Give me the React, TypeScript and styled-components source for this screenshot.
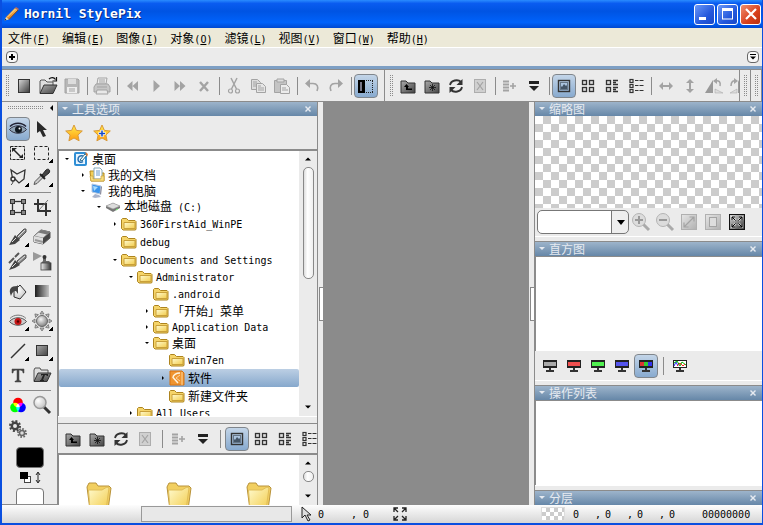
import React from "react";
import styled, { createGlobalStyle, css } from "styled-components";

const FACE = "#ebebeb";
const EDGE = "#8b8b8b";
const CJK = '"Noto Sans CJK SC", sans-serif';
const MONO = '"DejaVu Sans Mono", "Liberation Mono", monospace';

const GlobalStyle = createGlobalStyle`
  *, *::before, *::after { box-sizing: border-box; }
  body { margin: 0; font: 12px/16px ${CJK}; color: #000; }
  button { font: inherit; color: inherit; border: 0; padding: 0; background: none; }
  svg { display: block; flex: none; }
  ul { list-style: none; margin: 0; padding: 0; }
`;

/* ---------- text ---------- */

const Latin = styled.span`
  font: 10px/16px ${MONO};
  white-space: pre;
`;

const Text = ({ children }: { children: string }) => (
  <>
    {children.split(/([\x20-\x7e]+)/).filter(Boolean).map((run, i) =>
      /^[\x20-\x7e]/.test(run) ? <Latin key={i}>{run}</Latin> : <span key={i}>{run}</span>
    )}
  </>
);

/* ---------- icons ---------- */

const G = "#a3a3a3";
const D = "#333";

type SvgProps = { w?: number; h?: number; children: React.ReactNode };
const Svg = ({ w = 20, h = 20, children }: SvgProps) => (
  <svg width={w} height={h} viewBox={`0 0 ${w} ${h}`} fill="none" aria-hidden="true">{children}</svg>
);

const GradientStore = styled.svg`
  position: absolute;
  width: 0;
  height: 0;
`;
const Blend = styled.g`
  mix-blend-mode: screen;
`;
const Isolated = styled.g`
  isolation: isolate;
`;

const Defs = () => (
  <GradientStore aria-hidden="true">
    <defs>
      <linearGradient id="dark" x1="0" y1="0" x2="1" y2="1"><stop offset="0" stopColor="#b5b5b5" /><stop offset="1" stopColor="#222" /></linearGradient>
      <linearGradient id="page" x1="0" y1="0" x2="1" y2="1"><stop offset="0" stopColor="#d8d8d8" /><stop offset="1" stopColor="#3a3a3a" /></linearGradient>
      <linearGradient id="folderDark" x1="0" y1="0" x2="1" y2="1"><stop offset="0" stopColor="#aaa" /><stop offset="1" stopColor="#444" /></linearGradient>
      <linearGradient id="pale" x1="0" y1="0" x2="1" y2="1"><stop offset="0" stopColor="#e6e6e6" /><stop offset="1" stopColor="#b0b0b0" /></linearGradient>
      <linearGradient id="metal" x1="0" y1="0" x2="1" y2="0"><stop offset="0" stopColor="#eee" /><stop offset="1" stopColor="#333" /></linearGradient>
      <linearGradient id="fade" x1="0" y1="0" x2="1" y2="0"><stop offset="0" stopColor="#1c1c1c" /><stop offset="1" stopColor="#c4c4c4" /></linearGradient>
      <linearGradient id="gold" x1="0" y1="0" x2="1" y2="1"><stop offset="0" stopColor="#fffbd0" /><stop offset="1" stopColor="#f2cb4a" /></linearGradient>
      <linearGradient id="star" x1="0" y1="0" x2="0" y2="1"><stop offset="0" stopColor="#ffee4a" /><stop offset="1" stopColor="#ff9a10" /></linearGradient>
      <linearGradient id="pencil" x1="1" y1="0" x2="0" y2="1"><stop offset="0" stopColor="#f8c060" /><stop offset="1" stopColor="#e07818" /></linearGradient>
      <radialGradient id="ball" cx="0.4" cy="0.35" r="0.7"><stop offset="0" stopColor="#f4f4f4" /><stop offset="1" stopColor="#7a7a7a" /></radialGradient>
      <radialGradient id="lens" cx="0.35" cy="0.35" r="0.8"><stop offset="0" stopColor="#fff" /><stop offset="1" stopColor="#bbb" /></radialGradient>
    </defs>
  </GradientStore>
);

const folderBody = "M3 5h5l2 2h7v10H3z";
const star = "M10 2l2.400 5.400 5.900.6-4.400 4 1.200 5.800L10 15l-5.100 2.800L6.100 12 1.700 8l5.900-.6z";
const corners = "M8.500 8.500L5 5m0 3V5h3m3.500 3.500L15 5m-3 0h3v3m-6.500 3.500L5 15m0-3v3h3m3.500-3.500L15 15m-3 0h3v-3";
const lidUpper = "M2 7.500c4-4.500 12-4.500 16 0";
const eyeShape = "M1.500 10.500c4-5 13-5 17 0-4 5-13 5-17 0z";

const I = {
  pencil: <Svg w={17} h={16}><path d="M3 11L12 2l3 2-9 9.500z" fill="url(#pencil)" /><path d="M3 11L1.500 14.500 6 13.500z" fill="#f5e0b5" /><path d="M1.500 14.500l1-2 1 1.500z" fill="#222" /><path d="M12 2l1-1 3 2-1 1z" fill="#c86a50" /><path d="M4 11.500L12.500 3" stroke="#ffe08a" /><path d="M6 13.500L15 4" stroke="#8a4a18" /></Svg>,
  newDoc: <Svg><rect x="4.500" y="3.500" width="11" height="13" fill="url(#page)" stroke={D} /></Svg>,
  open: <Svg><path d="M2 17V5l1-1h4l2 2h6v3" fill="#ddd" stroke="#555" /><path d="M2 17.500L6 9h13l-4 8.500z" fill="url(#folderDark)" stroke={D} /><path d="M11 3c2-2 5-2 6.500.5M18.500 1v4h-4" stroke="#111" strokeWidth="1.200" /></Svg>,
  save: <Svg><path d="M3 3h13l1 1v13H3z" fill="#b7b7b7" stroke={G} /><path d="M6 3h8v5H6z" fill="#ddd" /><path d="M5 11h10v6H5z" fill="#eee" /><path d="M7 13h6M7 15h6" stroke={G} /></Svg>,
  print: <Svg><path d="M6 2h9l-1 6H5z" fill="#eee" stroke={G} /><path d="M4 8h12l2 3v5H2v-5z" fill="#c6c6c6" stroke={G} /><path d="M5 14h10l1 4H4z" fill="#e8e8e8" stroke={G} /><path d="M7 4h6M7 6h6M5 11h10" stroke={G} /></Svg>,
  rewind: <Svg><path d="M10.500 5v10L5 10zM16 5v10l-5.500-5z" fill={G} /></Svg>,
  play: <Svg><path d="M7.500 4v12l6.500-6z" fill={G} /></Svg>,
  forward: <Svg><path d="M4.500 5v10l5.500-5zM10 5v10l5.500-5z" fill={G} /></Svg>,
  cross: <Svg><path d="M6 6l8 9M14 6l-8 9" stroke={G} strokeWidth="2.400" /></Svg>,
  cut: <Svg><path d="M7 2l5.500 11M13 2L7.500 13" stroke={G} strokeWidth="1.500" /><circle cx="6.500" cy="15" r="2" stroke={G} strokeWidth="1.200" /><circle cx="13.500" cy="15" r="2" stroke={G} strokeWidth="1.200" /></Svg>,
  copy: <Svg><path d="M3.500 3.500h6l3 3v7h-9z" fill="#ddd" stroke={G} /><path d="M8.500 7.500h6l3 3v6h-9z" fill="#e6e6e6" stroke={G} /><path d="M5 6h4M5 8h3M5 10h3M10 10h3M10 12h6M10 14h6" stroke={G} /></Svg>,
  paste: <Svg><path d="M2.500 4.500h12v12h-12z" fill="#c4c4c4" stroke={G} /><path d="M5 3h7v3H5z" fill="#ddd" stroke={G} /><path d="M8.500 8.500h6l3 3v6h-9z" fill="#ececec" stroke={G} /><path d="M10 12h4M10 14h6" stroke={G} /></Svg>,
  undo: <Svg><path d="M8 3L3 7.500 8 12z" fill={G} /><path d="M7 7.500h4c4 0 6 3 4 7.500" stroke={G} strokeWidth="1.600" /></Svg>,
  redo: <Svg><path d="M12 3l5 4.500L12 12z" fill={G} /><path d="M13 7.500H9c-4 0-6 3-4 7.500" stroke={G} strokeWidth="1.600" /></Svg>,
  sidebar: <Svg><rect x="2" y="4" width="7" height="13" fill="#000" /><rect x="4" y="6" width="2" height="9" fill="#778" /><path d="M10 4.500h7M10 16.500h7M16.500 5v12" stroke="#222" strokeDasharray="1 1" /></Svg>,
  up: <Svg><path d={folderBody} fill="url(#folderDark)" stroke={D} /><path d="M8.500 8L6 11h2v3h6v-1.500h-4V11h1z" fill="#000" /></Svg>,
  folderNew: <Svg><path d={folderBody} fill="url(#folderDark)" stroke={D} /><path d="M10.500 8v7M7 11.500h7M8 9l5 5M13 9l-5 5" stroke="#111" strokeWidth=".8" /></Svg>,
  refresh: <Svg><path d="M4 9c1-5 8-6 11-3" stroke={D} strokeWidth="1.800" /><path d="M16.500 3v6h-6z" fill={D} /><path d="M16 11c-1 5-8 6-11 3" stroke={D} strokeWidth="1.800" /><path d="M3.500 17v-6h6z" fill={D} /></Svg>,
  deleteBox: <Svg><rect x="4.500" y="3.500" width="11" height="13" fill="#d0d0d0" stroke="#adadad" /><path d="M7 6l6 8M13 6l-6 8" stroke={G} strokeWidth="1.200" /></Svg>,
  listAdd: <Svg><path d="M3 5.500h6M3 8.500h6M3 11.500h6M3 14.500h6" stroke={G} strokeWidth="2" /><path d="M10 10h6M13 7v6" stroke={G} strokeWidth="1.600" /></Svg>,
  drop: <Svg><path d="M5 6.500h10" stroke="#222" strokeWidth="3" /><path d="M5 10h10l-5 5z" fill="#222" /></Svg>,
  picture: <Svg><rect x="4.500" y="4.500" width="11" height="11" stroke={D} strokeWidth="1.400" /><path d="M6 14V9l2 2 2-3 2 2 1-1 1 1v4z" fill="#456" /><rect x="6.500" y="6.500" width="7" height="7" stroke="#678" /></Svg>,
  grid: <Svg>{[4.5, 11.5].map(x => [4.5, 11.5].map(y => <rect key={x + y * 9} x={x} y={y} width="4" height="4" fill="#ddd" stroke={D} strokeWidth="1.300" />))}</Svg>,
  tiles: <Svg>{[4.5, 11.5].map(y => <g key={y} stroke={D} strokeWidth="1.300"><rect x="4.500" y={y} width="4" height="4" fill="#ddd" /><path d={`M11 ${y}h5M11 ${y + 2}h3M11 ${y + 4}h5`} /></g>)}</Svg>,
  list: <Svg>{[4.5, 9.5, 14.5].map(y => <g key={y} stroke={D} strokeWidth="1.200"><rect x="4" y={y - 1} width="3" height="3" /><path d={`M9 ${y}h3.500M13.500 ${y}h4`} /></g>)}</Svg>,
  flipH: <Svg><path d="M3 10l4-4v3h6V6l4 4-4 4v-3H7v3z" fill={G} /></Svg>,
  flipV: <Svg><path d="M10 3l4 4h-3v6h3l-4 4-4-4h3V7H6z" fill={G} /></Svg>,
  rotateL: <Svg><path d="M9 4v13H1z" fill="#999" /><path d="M11 13v4h8z" fill="#ddd" stroke={G} strokeWidth=".5" /><path d="M11 5c4-1 6 1 5 5" stroke={G} strokeWidth="1.500" /><path d="M13 2v6l-4-3z" fill={G} /></Svg>,
  rotateR: <Svg><path d="M2 17h7v-4z" fill="#ddd" stroke={G} strokeWidth=".5" /><path d="M10 4v13h8z" fill="#999" /><path d="M3 10c0-4 2-6 5-5" stroke={G} strokeWidth="1.500" /><path d="M6 2v6l4-3z" fill={G} /></Svg>,
  eye: <Svg><path d={lidUpper} stroke="#223" strokeWidth="1.500" /><path d={eyeShape} fill="#8fa3b5" stroke="#334" /><circle cx="10.500" cy="10.500" r="3.500" fill="#101820" /><circle cx="11.500" cy="9.500" r="1" fill="#fff" /></Svg>,
  redEye: <Svg><path d={lidUpper} stroke="#777" /><path d={eyeShape} fill="#ccc" stroke="#555" /><circle cx="10" cy="10.500" r="3.500" fill="#c41616" /><circle cx="10" cy="10.500" r="1.200" fill="#500" /></Svg>,
  arrow: <Svg><path d="M5 2v12l3-2 3 6 3-1-3-6h4z" fill="#2a2a2a" /></Svg>,
  resizeSel: <Svg><rect x="2.500" y="3.500" width="14" height="13" stroke="#222" strokeDasharray="3 1" /><path d="M6 7l7 7" stroke="#222" strokeWidth="1.500" /><path d="M4 5h5l-5 4zM15 15h-4l4-4z" fill="#222" /></Svg>,
  marquee: <Svg><rect x="2.500" y="3.500" width="14" height="13" stroke="#222" strokeDasharray="3 2" /></Svg>,
  lasso: <Svg><path d="M4.500 11L3 3l6 4 8-4-1 9-5 4-4-4" stroke={D} strokeWidth="1.300" /><circle cx="5" cy="12" r="2" stroke={D} strokeWidth="1.500" /><path d="M5 14c0 2-1 3-2 4" stroke={D} /></Svg>,
  pick: <Svg><path d="M2 17.500l1-3 7-7 2 2-7 7z" fill="#ccc" stroke="#555" /><path d="M10 8l4-5c2-2 5 0 3 3l-5 4z" fill="#444" stroke="#222" /><path d="M8 7l5 5" stroke="#222" strokeWidth="2" /></Svg>,
  transform: <Svg><rect x="4.500" y="4.500" width="11" height="11" stroke={D} strokeWidth="1.300" />{[2, 13].map(x => [2, 13].map(y => <rect key={x * 20 + y} x={x + .5} y={y + .5} width="4" height="4" fill="#888" stroke={D} />))}</Svg>,
  crop: <Svg><path d="M6 2v12h13M2 7h12v12" stroke="#333" strokeWidth="2" /><path d="M7 13l9-10" stroke="#777" /></Svg>,
  brush: <Svg><path d="M9 9l7-7h2v3l-7 7z" fill="#888" stroke="#555" /><path d="M7 8l5 5-5 4-6 1 3-5z" fill="#444" /><path d="M10 10l7-7M4 15l4-4" stroke="#ddd" /></Svg>,
  brushes: <Svg><path d="M9 10l7-6h2v3l-7 6z" fill="#888" stroke="#555" /><path d="M7 9l5 5-5 3-6 2 3-5z" fill="#444" /><path d="M10 11l7-6M4 16l4-4" stroke="#ddd" /><path d="M1 12l5-5M7 6l4-4" stroke="#555" strokeWidth="2" /></Svg>,
  eraser: <Svg><path d="M2 9l7-6 9 2v6l-7 6-9-2z" fill="#444" stroke="#555" /><path d="M2 9l7-6 9 2-7 6z" fill="#ddd" stroke="#777" strokeWidth=".6" /><path d="M6 5.500L9 3l9 2-3 2.500z" fill="#777" /><path d="M2 9l9 2v6l-9-2z" fill="#ddd" /><path d="M3 13l8 2" stroke="#999" strokeWidth="2" /></Svg>,
  spray: <Svg><path d="M1 1v9l9-5z" fill="#999" /><path d="M11 7h3v3h3l2 2H9l2-2z" fill="#666" /><rect x="9" y="12" width="10" height="7" fill="url(#metal)" stroke="#444" strokeWidth=".8" /><circle cx="12.500" cy="6" r="2" fill="#333" /></Svg>,
  bucket: <Svg><path d="M6 10l6-6 6 7-6 7-6-2z" fill="url(#lens)" stroke="#333" /><path d="M9 5C3 5 0 8 3 15c1-3 2-5 5-5l2 3V4z" fill="#444" /></Svg>,
  gradient: <Svg><rect x="3" y="4" width="14" height="12" fill="url(#fade)" /></Svg>,
  sun: <Svg>{[0, 45, 90, 135, 180, 225, 270, 315].map(a => <path key={a} d="M8 3l2-3 2 3z" fill="#bbb" stroke="#666" strokeWidth=".7" transform={`rotate(${a} 10 10)`} />)}<circle cx="10" cy="10" r="5.500" fill="url(#ball)" stroke="#666" /></Svg>,
  line: <Svg><path d="M3 17L17 3" stroke="#333" strokeWidth="1.500" /></Svg>,
  rect: <Svg><rect x="4.500" y="4.500" width="11" height="10" fill="url(#folderDark)" stroke="#333" /></Svg>,
  type: <Svg><path d="M4 4h12v4h-1c0-2-1-3-4-3v9c0 1.500.5 2 2 2v1H7v-1c1.500 0 2-.5 2-2V5C6 5 5 6 5 8H4z" fill="#444" stroke="#444" strokeWidth=".5" /></Svg>,
  typeFolder: <Svg><path d="M2 16V5l1-2h5l1 2h7v3" fill="#ddd" stroke="#555" /><path d="M2 16.500L6 8h13l-4 8.500z" fill="url(#folderDark)" stroke={D} /><path d="M9 9h7v2h-1l-1-1h-1l-2 5h1v1H8v-1h1l2-5h-1l-1 1z" fill="#222" /></Svg>,
  rgb: <Svg><Isolated><circle cx="10" cy="7.500" r="4.800" fill="#f00" /><Blend><circle cx="7" cy="12.500" r="4.800" fill="#0f0" /></Blend><Blend><circle cx="13" cy="12.500" r="4.800" fill="#00f" /></Blend></Isolated></Svg>,
  zoom: <Svg><path d="M12 12l6 6" stroke="#333" strokeWidth="3" /><circle cx="8" cy="7.500" r="6" fill="url(#lens)" stroke="#999" strokeWidth="1.500" /></Svg>,
  gears: <Svg><circle cx="7" cy="7" r="5" stroke="#444" strokeWidth="2" strokeDasharray="2 1.900" /><circle cx="7" cy="7" r="3.200" stroke="#444" strokeWidth="2.400" /><circle cx="14" cy="14" r="4" stroke="#666" strokeWidth="2" strokeDasharray="1.600 1.500" /><circle cx="14" cy="14" r="2.500" fill="#ddd" stroke="#666" strokeWidth="1.500" /></Svg>,
  star: <Svg><path d={star} fill="url(#star)" stroke="#d99a3a" /></Svg>,
  starAdd: <Svg><path d={star} fill="url(#star)" stroke="#d99a3a" /><path d="M10 7v7M6.500 10.500h7" stroke="#fff" strokeWidth="3" /><path d="M10 7.500v6M7 10.500h6" stroke="#1248c8" strokeWidth="1.500" /></Svg>,
  zoomIn: <Svg><path d="M12 12l6 6" stroke="#aaa" strokeWidth="3" /><circle cx="8" cy="8" r="6.500" fill="#dcdcdc" stroke="#b4b4b4" /><path d="M4 8h8M8 4v8" stroke="#999" strokeWidth="2" /></Svg>,
  zoomOut: <Svg><path d="M12 12l6 6" stroke="#aaa" strokeWidth="3" /><circle cx="8" cy="8" r="6.500" fill="#dcdcdc" stroke="#b4b4b4" /><path d="M4 8h8" stroke="#999" strokeWidth="2" /></Svg>,
  fit: <Svg><rect x="2.500" y="2.500" width="15" height="15" fill="url(#pale)" stroke="#b0b0b0" /><path d="M5 15L15 5M10.500 5H15v4.500M5 10.500V15h4.500" stroke={G} strokeWidth="1.200" /></Svg>,
  actual: <Svg><rect x="2.500" y="2.500" width="15" height="15" fill="url(#pale)" stroke="#b0b0b0" /><rect x="6.500" y="5.500" width="7" height="9" fill="#ddd" stroke={G} /></Svg>,
  full: <Svg><rect x="2.500" y="2.500" width="15" height="15" fill="url(#page)" stroke="#111" /><path d={corners} stroke="#fff" strokeWidth="2.500" opacity=".5" /><path d={corners} stroke="#000" /></Svg>,
  computer: <Svg w={16} h={16}><path d="M3 1l9 2-1 8-8-2z" fill="#3a94ec" stroke="#b8c8e0" /><path d="M4 3l5 1-4 4z" fill="#a8dcff" /><path d="M12 3l1 1-1 8-1-1z" fill="#889" /><path d="M6 11l4 1 2 2-6 1-3-1z" fill="#a9b4cc" /></Svg>,
  drive: <Svg w={16} h={16}><path d="M1 7l7-3 7 3v2l-7 4-7-4z" fill="#777" /><path d="M1 7l7-3 7 3-7 3z" fill="#dcdcdc" stroke="#999" strokeWidth=".6" /><path d="M11 11l2-1" stroke="#7f7" /></Svg>,
  desktop: <Svg w={16} h={16}><rect x="1" y="1" width="13" height="14" rx="2" fill="#2f8fd6" /><rect x="3" y="3" width="9" height="10" fill="#e8f5ff" /><path d="M10 5C7 4 5 6 5 8.500S8 12 10 10.500" stroke="#2870b0" strokeWidth="1.500" /><path d="M7 9l5-6 2 1-5 6z" fill="#fff" stroke="#268" /><path d="M12 1l3 2-1 3z" fill="#e07830" /></Svg>,
  documents: <Svg w={16} h={16}><path d="M1 4h4l2 2h8v8H2z" fill="#f3cf57" stroke="#b58a1c" /><path d="M5 1h6l2 2v9H5z" fill="#fff" stroke="#8ab" /><path d="M7 4h4M7 6h4M7 8h4" stroke="#69c" /><path d="M1 9h3v3h8V9h3v5H2z" fill="#f8de80" stroke="#c79c30" strokeWidth=".6" /></Svg>,
  folder: <Svg w={16} h={16}><path d="M.5 12.500V3.500l1-1h4l2 2H14l1 1v8l-1 .5H2z" fill="#f5d469" stroke="#ad841f" /><path d="M3 6.500h11v6H3z" fill="url(#gold)" stroke="#c9a03a" /></Svg>,
  software: <Svg w={16} h={16}><path d="M1 1h12l2 2v12H1z" fill="#ef9430" stroke="#d57212" /><path d="M13 2v13" stroke="#ffd79a" /><path d="M11 3C7 3 4 5 4 7.500L9 13" stroke="#fff4de" strokeWidth="1.500" /><path d="M11 5L7 8l4 3" stroke="#fbd3a0" /></Svg>,
  bigFolder: <Svg w={28} h={30}><path d="M2 6l2-4h7l2 3h11l2 2-3 22H5z" fill="#f2cf60" stroke="#b8923a" /><path d="M3.500 9H17l5-3 2 1-3 22H5z" fill="url(#gold)" stroke="#e0bd58" /></Svg>,
  pointer: <Svg w={12} h={16}><path d="M2 1v11l3-3 3 6 2-1-3-5h4z" fill="#ddd" stroke="#222" /></Svg>,
  expand: <Svg w={16} h={16}><path d="M6 6L2 2m0 4V2h4m4 4l4-4m-4 0h4v4M6 10l-4 4m0-4v4h4m4-4l4 4m-4 0h4v-4" stroke="#222" strokeWidth="1.300" /></Svg>,
  minimize: <Svg w={18} h={18}><path d="M3 12h7v3H3z" fill="#fff" /></Svg>,
  maximize: <Svg w={18} h={18}><rect x="3.500" y="4" width="10" height="10" stroke="#fff" /><path d="M3 4.500h11" stroke="#fff" strokeWidth="3" /></Svg>,
  close: <Svg w={18} h={18}><path d="M4 4l10 10M14 4L4 14" stroke="#fff" strokeWidth="2.200" /></Svg>,
  smallClose: <Svg w={8} h={8}><path d="M1 1.500h2v1h2v-1h2v1H6v1H5v1h1v1h1v1H5v-1H3v1H1v-1h1v-1h1v-1H2v-1H1z" fill="#e6eaf0" /></Svg>,
  plus: <Svg w={8} h={8}><path d="M4 1v6M1 4h6" stroke="#000" strokeWidth="2" /></Svg>,
  chevron: <Svg w={8} h={8}><path d="M1 1.500h6" stroke="#000" /><path d="M1 3.500h6l-3 3z" fill="#000" /></Svg>,
  headTri: <Svg w={6} h={4}><path d="M0 0h6L3 3z" fill="#e6eaf0" /></Svg>,
  triUp: <Svg w={6} h={4}><path d="M0 3.500h6L3 .5z" fill="#000" /></Svg>,
  triDown: <Svg w={6} h={4}><path d="M0 .5h6l-3 3z" fill="#000" /></Svg>,
  collapse: <Svg w={4} h={6}><path d="M4 0v6L1 3z" fill="#000" /></Svg>,
  nodeOpen: <Svg w={4} h={4}><path d="M0 1h4L2 3z" fill="#000" /></Svg>,
  nodeClosed: <Svg w={4} h={4}><path d="M1 0l2 2-2 2z" fill="#000" /></Svg>,
  swap: <Svg w={24} h={16}><rect x="6.500" y="6.500" width="6" height="6" fill="#fff" stroke="#444" /><rect x="2" y="2" width="8" height="7" fill="#000" /><path d="M20 3v9M18 5l2-3 2 3M18 10l2 3 2-3" stroke="#222" /></Svg>,
};
type IconName = keyof typeof I;

const monitor = (fill: React.ReactNode) => (
  <Svg><rect x="3" y="4" width="14" height="8" fill="#222" />{fill}<path d="M9 12h2v2h3v2H6v-2h3z" fill="#333" /></Svg>
);
const monitors: [string, React.ReactNode][] = [
  ["灰度", monitor(<rect x="4" y="6" width="12" height="4" fill="#aaa" />)],
  ["红", monitor(<rect x="4" y="6" width="12" height="4" fill="#f05050" />)],
  ["绿", monitor(<rect x="4" y="6" width="12" height="4" fill="#50f050" />)],
  ["蓝", monitor(<rect x="4" y="6" width="12" height="4" fill="#5555ee" />)],
  ["RGB", monitor(<><rect x="4" y="6" width="4" height="4" fill="#d33" /><rect x="8" y="6" width="4" height="4" fill="#3c3" /><rect x="12" y="6" width="4" height="4" fill="#33e" /></>)],
];
const spectrum = monitor(<><rect x="4" y="5" width="12" height="6" fill="#fff" /><path d="M4 10l2-4 2 4" stroke="#22f" /><path d="M4 7l3-2 3 5 2-4 4 3" stroke="#0b0" /><path d="M7 10l3-3 3 3 2-2" stroke="#f22" /></>);

/* ---------- window frame ---------- */

const Frame = styled.div`
  display: flex;
  flex-direction: column;
  height: 100vh;
  border: solid #0a4fe0;
  border-width: 0 1px 2px 2px;
  background: ${FACE};
  overflow: hidden;
`;
const TitleBar = styled.header`
  display: flex;
  align-items: center;
  flex: none;
  height: 28px;
  padding: 0 1px;
  gap: 4px;
  background: linear-gradient(#2a8cff 0, #0a5cf0 12%, #0054e3 40%, #0062fb 80%, #0048d0 100%);
`;
const Title = styled.h1`
  flex: 1;
  margin: 0;
  color: #fff;
  font: bold 13px/28px ${MONO};
  text-shadow: 1px 1px #0a2a80;
`;
const CaptionButton = styled.button<{ $danger?: boolean }>`
  display: grid;
  place-items: center;
  width: 21px;
  height: 21px;
  margin-left: -2px;
  border: 1px solid #fff;
  border-radius: 3px;
  background: ${p => (p.$danger ? "linear-gradient(135deg, #f09070, #d8401c 60%, #b83010)" : "linear-gradient(135deg, #6a98f8, #2458dc 60%, #1848c8)")};
`;
const MenuBar = styled.nav`
  display: flex;
  flex: none;
  height: 20px;
  gap: 12px;
  padding: 2px 6px 0;
  background: #ece9d8;
  border-bottom: 1px solid #fff;
`;
const MenuItem = styled.button`
  height: 16px;
  white-space: nowrap;
`;
const TabStrip = styled.div`
  display: flex;
  flex: none;
  align-items: center;
  justify-content: space-between;
  height: 21px;
  padding: 0 3px 0 4px;
  border-bottom: 3px solid #7d9fc4;
`;
const RoundButton = styled.button`
  display: grid;
  place-items: center;
  width: 12px;
  height: 12px;
  border: 1px solid #666;
  border-radius: 4px;
  background: #f8f8f8;
`;

/* ---------- toolbars ---------- */

const ToolbarRow = styled.div`
  display: flex;
  flex: none;
  height: 33px;
  border: solid ${EDGE};
  border-width: 1px 0;
`;
const Toolbar = styled.div<{ $grow?: boolean; $pad?: number }>`
  display: flex;
  align-items: center;
  flex: ${p => (p.$grow ? "1 1 0" : "none")};
  min-width: 0;
  padding-left: ${p => p.$pad ?? 3}px;
  overflow: hidden;
  border-right: 1px solid ${EDGE};
`;
const Grip = styled.span<{ $wide?: boolean }>`
  flex: none;
  width: ${p => (p.$wide ? "36px" : "4px")};
  height: ${p => (p.$wide ? "4px" : "22px")};
  margin-right: ${p => (p.$wide ? "0" : "3px")};
  background: conic-gradient(#8a8a8a 0 25%, transparent 0) 0 0 / 2px 2px;
`;
const pressed = css`
  border: 1px solid #80868c;
  border-radius: 4px;
  background: linear-gradient(#c3d5e8, #88aacf);
`;
const ToolButton = styled.button<{ $on?: boolean }>`
  position: relative;
  display: grid;
  place-items: center;
  flex: none;
  width: 24px;
  height: 24px;
  ${p => p.$on && pressed}
`;
const Divider = styled.span<{ $wide?: boolean }>`
  flex: none;
  width: 1px;
  height: 18px;
  margin: ${p => (p.$wide ? "0 4px 0 5px" : "0 2px 0 3px")};
  background: ${EDGE};
`;

type Tool = [IconName, string, boolean?] | null;
const Tools = ({ items, wide }: { items: Tool[]; wide?: boolean }) => (
  <>
    {items.map((t, i) => t
      ? <ToolButton key={i} type="button" aria-label={t[1]} aria-pressed={t[2]} $on={t[2]}>{I[t[0]]}</ToolButton>
      : <Divider key={i} $wide={wide} />)}
  </>
);

const mainTools: Tool[] = [
  ["newDoc", "新建"], ["open", "打开"], ["save", "保存"], null, ["print", "打印"], null,
  ["rewind", "最前"], ["play", "播放"], ["forward", "最后"], ["cross", "关闭"], null,
  ["cut", "剪切"], ["copy", "复制"], ["paste", "粘贴"], null, ["undo", "撤销"], ["redo", "重做"], null,
  ["sidebar", "面板", true],
];
const browseTools: Tool[] = [
  ["up", "向上"], ["folderNew", "新建文件夹"], ["refresh", "刷新"], ["deleteBox", "删除"], null,
  ["listAdd", "添加"], ["drop", "更多"], null,
  ["picture", "缩略图", true], ["grid", "图标"], ["tiles", "平铺"], ["list", "列表"],
];
const rotateTools: Tool[] = [null, ["flipH", "水平翻转"], ["flipV", "垂直翻转"], ["rotateL", "向左旋转"], ["rotateR", "向右旋转"]];

/* ---------- toolbox ---------- */

const Body = styled.main`
  display: flex;
  flex: 1;
  min-height: 0;
`;
const Toolbox = styled.aside`
  flex: none;
  width: 56px;
  overflow: hidden;
  border-right: 1px solid ${EDGE};
  border-bottom: 1px solid ${EDGE};
`;
const ToolboxHead = styled.div`
  display: flex;
  align-items: center;
  justify-content: space-between;
  height: 12px;
  padding: 0 4px 0 5px;
  margin-bottom: 3px;
`;
const ToolGroup = styled.div`
  display: grid;
  grid-template-columns: 24px 24px;
  width: 48px;
  margin-left: 4px;
  & + &::before {
    content: "";
    grid-column: 1 / -1;
    height: 1px;
    margin: 3px 3px 2px;
    background: ${EDGE};
  }
`;
const Corner = styled.i`
  position: absolute;
  right: 1px;
  bottom: 2px;
  width: 4px;
  height: 4px;
  background: linear-gradient(135deg, transparent 50%, #000 50%);
`;
const Colors = styled.div`
  display: flex;
  flex-direction: column;
  align-items: center;
  margin-top: 6px;
  gap: 2px;
`;
const Swatch = styled.button<{ $color: string }>`
  width: 28px;
  height: 21px;
  border: 1px solid #777;
  border-radius: 4px;
  background: ${p => p.$color};
`;

const toolGroups: [IconName, string, boolean?][][] = [
  [["eye", "浏览"], ["arrow", "选择"], ["resizeSel", "调整选区"], ["marquee", "矩形选区", true], ["lasso", "套索", true], ["pick", "取色", true]],
  [["transform", "变形"], ["crop", "裁剪"]],
  [["brush", "画笔", true], ["eraser", "橡皮擦"], ["brushes", "克隆画笔"], ["spray", "喷枪"]],
  [["bucket", "填充"], ["gradient", "渐变"]],
  [["redEye", "红眼", true], ["sun", "亮度", true]],
  [["line", "直线", true], ["rect", "矩形", true], ["type", "文字"], ["typeFolder", "文字库"]],
  [["rgb", "颜色"], ["zoom", "缩放"], ["gears", "设置"]],
];

/* ---------- panels ---------- */

const LeftDock = styled.section`
  display: flex;
  flex-direction: column;
  flex: none;
  width: 260px;
  border-right: 1px solid ${EDGE};
`;
const RightDock = styled.section`
  display: flex;
  flex-direction: column;
  flex: none;
  width: 228px;
  border-left: 1px solid ${EDGE};
`;
const PanelHead = styled.header`
  display: flex;
  align-items: center;
  flex: none;
  height: 14px;
  padding: 0 5px 0 4px;
  gap: 4px;
  background: linear-gradient(#9db4cb, #6687a8);
  color: #e6eaf0;
`;
const PanelTitle = styled.h2`
  flex: 1;
  margin: 0;
  font: 12px/14px ${CJK};
`;
const Head = ({ title }: { title: string }) => (
  <PanelHead>
    {I.headTri}
    <PanelTitle>{title}</PanelTitle>
    <button type="button" aria-label={`关闭${title}`}>{I.smallClose}</button>
  </PanelHead>
);
const PanelBar = styled.div<{ $h: number; $gap?: number; $left?: number }>`
  display: flex;
  align-items: center;
  flex: none;
  height: ${p => p.$h}px;
  gap: ${p => p.$gap ?? 0}px;
  padding-left: ${p => p.$left ?? 3}px;
  overflow: hidden;
`;
const Scroller = styled.div<{ $h?: number }>`
  display: flex;
  flex: ${p => (p.$h ? `0 0 ${p.$h}px` : "1 1 0")};
  min-height: 0;
  border-top: 2px solid ${EDGE};
  border-left: 1px solid ${EDGE};
  background: #fff;
`;
const Gap = styled.div<{ $h: number }>`
  flex: none;
  height: ${p => p.$h}px;
  border-top: 1px solid #fff;
  border-bottom: 1px solid ${EDGE};
`;
const Track = styled.div`
  display: flex;
  flex-direction: column;
  align-items: center;
  flex: none;
  width: 18px;
  padding: 6px 0 7px;
  gap: 6px;
  background: ${FACE};
`;
const Thumb = styled.span<{ $h: number }>`
  width: 11px;
  height: ${p => p.$h}px;
  border: 1px solid #888;
  border-radius: 5px;
  background: linear-gradient(90deg, #ddd, #fff 40%, #eee);
`;
const Spring = styled.span`
  flex: 1;
`;
const Scrollbar = ({ thumb }: { thumb: number }) => (
  <Track>{I.triUp}<Thumb $h={thumb} /><Spring />{I.triDown}</Track>
);

const Tree = styled.ul`
  flex: 1;
  overflow: hidden;
`;
const Node = styled.li<{ $level: number; $tall?: boolean; $on?: boolean }>`
  display: flex;
  align-items: center;
  height: ${p => (p.$tall ? 18 : 16)}px;
  padding-left: ${p => 6 + p.$level * 16}px;
  white-space: nowrap;
  border-radius: 2px;
  background: ${p => (p.$on ? "linear-gradient(#bccfe4, #86a8cc)" : "none")};
`;
const Twist = styled.span`
  width: 8px;
`;
const NodeText = styled.span`
  margin-left: 3px;
`;

const nodes: [number, IconName, string, "open" | "closed" | "", boolean?][] = [
  [0, "desktop", "桌面", "open"],
  [1, "documents", "我的文档", "closed"],
  [1, "computer", "我的电脑", "open"],
  [2, "drive", "本地磁盘 (C:)", "open"],
  [3, "folder", "360FirstAid_WinPE", "closed", true],
  [3, "folder", "debug", "", true],
  [3, "folder", "Documents and Settings", "open", true],
  [4, "folder", "Administrator", "open"],
  [5, "folder", ".android", "", true],
  [5, "folder", "「开始」菜单", "closed"],
  [5, "folder", "Application Data", "closed"],
  [5, "folder", "桌面", "open"],
  [6, "folder", "win7en", "", true],
  [6, "software", "软件", "closed", true],
  [6, "folder", "新建文件夹", "", true],
  [4, "folder", "All Users", "closed"],
];

const Files = styled.div`
  display: grid;
  grid-template-columns: repeat(3, 80px);
  justify-items: center;
  flex: 1;
  padding-top: 26px;
  overflow: hidden;
`;
const Splitter = styled.div`
  display: flex;
  align-items: center;
  flex: none;
  width: 5px;
  padding-left: 1px;
  &::before {
    content: "";
    flex: 1;
    height: 34px;
    border: solid #888;
    border-width: 1px 0 1px 1px;
    background: #fff;
  }
`;
const Canvas = styled.div`
  flex: 1;
  background: ${EDGE};
`;
const checker = css<{ $cell: number }>`
  background: repeating-conic-gradient(#ccc 0 25%, #fff 0 50%) 0 0 / ${p => p.$cell * 2}px ${p => p.$cell * 2}px;
`;
const Preview = styled.div<{ $cell: number }>`
  flex: none;
  height: 92px;
  ${checker}
`;
const Well = styled.div<{ $grow?: boolean }>`
  flex: ${p => (p.$grow ? "1 1 0" : "0 0 95px")};
  border: solid ${EDGE};
  border-width: 1px 0 0 1px;
  background: #fff;
`;
const Combo = styled.div`
  position: relative;
  display: flex;
  flex: none;
  width: 92px;
  height: 24px;
`;
const ComboSelect = styled.select`
  appearance: none;
  width: 100%;
  border: 1px solid #777;
  border-radius: 5px;
  background: linear-gradient(90deg, #fff calc(100% - 17px), #777 calc(100% - 17px), #777 calc(100% - 16px), #eee calc(100% - 16px));
`;
const ComboArrow = styled.i`
  position: absolute;
  right: 4px;
  top: 10px;
  border: 4px solid transparent;
  border-top: 5px solid #000;
  border-bottom: 0;
  pointer-events: none;
`;

/* ---------- status bar ---------- */

const Status = styled.footer`
  display: flex;
  align-items: center;
  flex: none;
  height: 18px;
  background: linear-gradient(#fdfdfd, #d6d6d6);
`;
const Progress = styled.div`
  width: 151px;
  height: 16px;
  margin: 0 8px 0 139px;
  border: 1px solid #999;
  background: #e8e8e8;
`;
const Field = styled.span<{ $w: number }>`
  flex: none;
  width: ${p => p.$w}px;
`;
const Transparency = styled.span<{ $cell: number }>`
  width: 24px;
  height: 14px;
  margin-right: 8px;
  border: 1px solid #ddd;
  ${checker}
`;
const menus = [["文件", "F"], ["编辑", "E"], ["图像", "I"], ["对象", "O"], ["滤镜", "L"], ["视图", "V"], ["窗口", "W"], ["帮助", "H"]];

export default function App() {
  return (
    <Frame>
      <GlobalStyle />
      <Defs />
      <TitleBar>
        {I.pencil}
        <Title>Hornil StylePix</Title>
        <CaptionButton type="button" aria-label="最小化">{I.minimize}</CaptionButton>
        <CaptionButton type="button" aria-label="最大化">{I.maximize}</CaptionButton>
        <CaptionButton type="button" aria-label="关闭" $danger>{I.close}</CaptionButton>
      </TitleBar>
      <MenuBar>
        {menus.map(([name, key]) => (
          <MenuItem key={key} type="button">{name}<Latin>(<u>{key}</u>)</Latin></MenuItem>
        ))}
      </MenuBar>
      <TabStrip>
        <RoundButton type="button" aria-label="添加标签">{I.plus}</RoundButton>
        <RoundButton type="button" aria-label="标签列表">{I.chevron}</RoundButton>
      </TabStrip>
      <ToolbarRow>
        <Toolbar>
          <Grip />
          <Tools items={mainTools} />
          <Field $w={6} />
        </Toolbar>
        <Toolbar $grow $pad={4}><Grip /><Tools items={[...browseTools, ...rotateTools]} /></Toolbar>
        <Toolbar><Grip /></Toolbar>
        <Toolbar><Grip /></Toolbar>
      </ToolbarRow>

      <Body>
        <Toolbox>
          <ToolboxHead><Grip $wide />{I.collapse}</ToolboxHead>
          {toolGroups.map((group, g) => (
            <ToolGroup key={g}>
              {group.map(([icon, label, more]) => (
                <ToolButton key={icon} type="button" aria-label={label} $on={icon === "eye"}>
                  {I[icon]}{more && <Corner />}
                </ToolButton>
              ))}
            </ToolGroup>
          ))}
          <Colors>
            <Swatch type="button" aria-label="前景色" $color="#000" />
            <button type="button" aria-label="交换颜色">{I.swap}</button>
            <Swatch type="button" aria-label="背景色" $color="#fff" />
          </Colors>
        </Toolbox>

        <LeftDock>
          <Head title="工具选项" />
          <PanelBar $h={33} $gap={4} $left={4}><Tools items={[["star", "收藏"], ["starAdd", "添加收藏"]]} /></PanelBar>
          <Scroller $h={267}>
            <Tree role="tree" aria-label="文件夹">
              {nodes.map(([level, icon, label, state, tall], i) => (
                <Node key={i} role="treeitem" aria-selected={label === "软件"} $level={level} $tall={tall} $on={label === "软件"}>
                  <Twist>{state === "open" ? I.nodeOpen : state === "closed" ? I.nodeClosed : null}</Twist>
                  {I[icon]}
                  <NodeText><Text>{label}</Text></NodeText>
                </Node>
              ))}
            </Tree>
            <Scrollbar thumb={112} />
          </Scroller>
          <Gap $h={8} />
          <PanelBar $h={29}><Tools wide items={browseTools} /></PanelBar>
          <Scroller>
            <Files>{I.bigFolder}{I.bigFolder}{I.bigFolder}</Files>
            <Scrollbar thumb={16} />
          </Scroller>
        </LeftDock>
        <Splitter />
        <Canvas />
        <Splitter />

        <RightDock>
          <Head title="缩略图" />
          <Preview $cell={8} />
          <PanelBar $h={28} $left={2}>
            <Combo>
              <ComboSelect aria-label="缩放比例"><option></option></ComboSelect>
              <ComboArrow />
            </Combo>
            <Tools items={[["zoomIn", "放大"], ["zoomOut", "缩小"], ["fit", "适合"], ["actual", "实际大小"], ["full", "全屏"]]} />
          </PanelBar>
          <Gap $h={6} />
          <Head title="直方图" />
          <Well />
          <PanelBar $h={29}>
            {monitors.map(([label, icon]) => (
              <ToolButton key={label} type="button" aria-label={label} $on={label === "RGB"}>{icon}</ToolButton>
            ))}
            <Divider $wide />
            <ToolButton type="button" aria-label="统计">{spectrum}</ToolButton>
          </PanelBar>
          <Gap $h={6} />
          <Head title="操作列表" />
          <Well $grow />
          <Gap $h={6} />
          <Head title="分层" />
        </RightDock>
      </Body>

      <Status>
        <Progress role="progressbar" aria-label="进度" />
        {I.pointer}
        <Field $w={6} />
        <Field $w={33}><Latin>0</Latin></Field>
        <Field $w={12}><Latin>,</Latin></Field>
        <Field $w={29}><Latin>0</Latin></Field>
        {I.expand}
        <Spring />
        <Transparency $cell={4} />
        {[0, 1, 2].map(i => (
          <React.Fragment key={i}>
            <Field $w={22}><Latin>0</Latin></Field>
            <Field $w={10}><Latin>,</Latin></Field>
          </React.Fragment>
        ))}
        <Field $w={33}><Latin>0</Latin></Field>
        <Field $w={60}><Latin>00000000</Latin></Field>
      </Status>
    </Frame>
  );
}
